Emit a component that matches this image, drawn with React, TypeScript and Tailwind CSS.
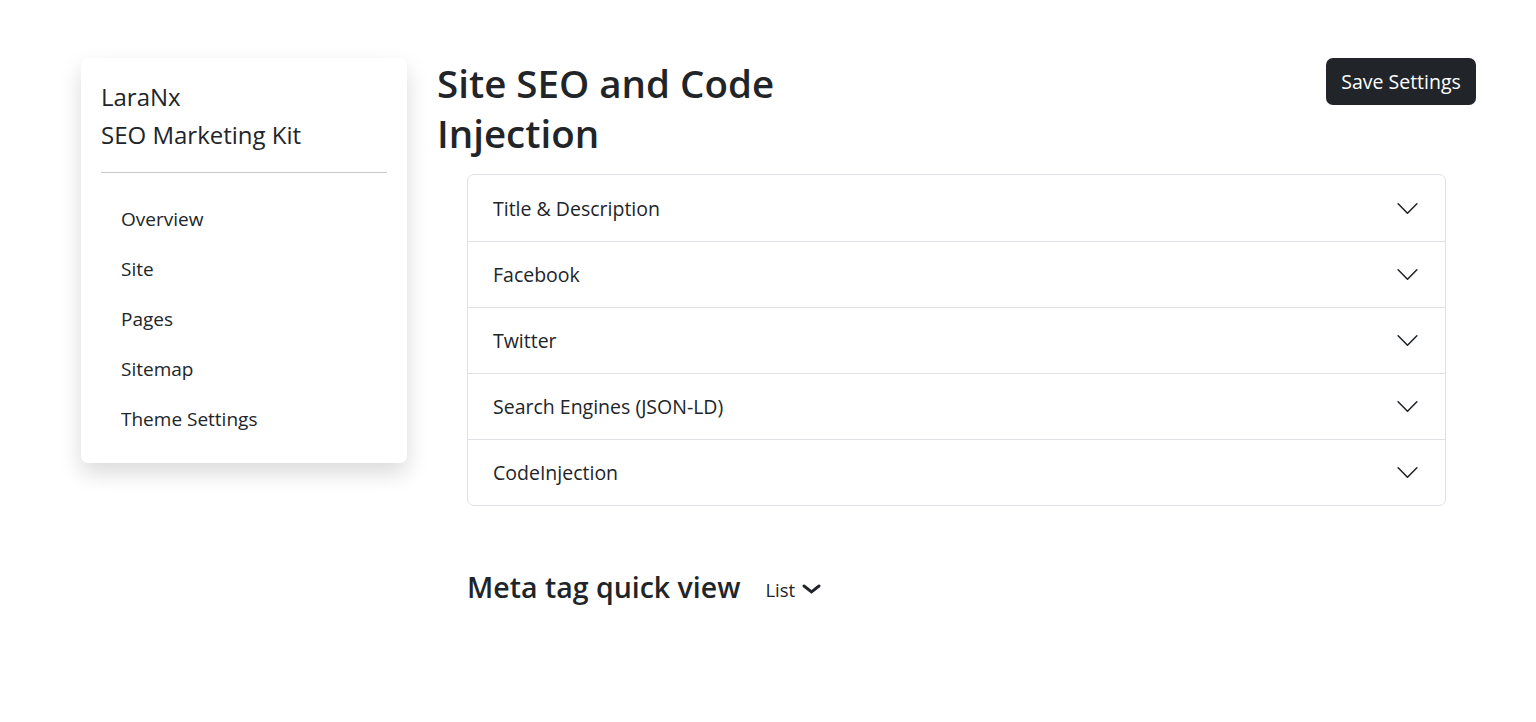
import React from "react";

const items = [
  "Title & Description",
  "Facebook",
  "Twitter",
  "Search Engines (JSON-LD)",
  "CodeInjection",
];

const nav = ["Overview", "Site", "Pages", "Sitemap", "Theme Settings"];

function Chevron() {
  return (
    <svg width="25" height="25" viewBox="0 0 16 16" fill="none" className="shrink-0">
      <path
        d="M2 5L8 11L14 5"
        stroke="#212529"
        strokeWidth="1"
        strokeLinecap="round"
        strokeLinejoin="round"
      />
    </svg>
  );
}

export default function App() {
  return (
    <div
      className="min-h-[722px] bg-white text-[#212529]"
      style={{ fontFamily: '"Open Sans", "Noto Sans", sans-serif' }}
    >
      <div className="flex items-start gap-[30px] pl-[81px] pr-[60px] pt-[58px]">
        {/* Sidebar */}
        <aside className="w-[326px] shrink-0 rounded-[7px] bg-white px-[20px] pb-[19px] pt-[20px] shadow-[0_10px_22px_rgba(0,0,0,0.15)]">
          <div className="text-[24px] leading-[37.5px]">
            <div>LaraNx</div>
            <div>SEO Marketing Kit</div>
          </div>
          <hr className="mb-[21px] mt-[19px] border-0 border-t border-[#c8c9ca]" />
          <ul>
            {nav.map((n) => (
              <li key={n} className="flex h-[50px] items-center px-[20px] text-[19px]">
                {n}
              </li>
            ))}
          </ul>
        </aside>

        {/* Main */}
        <main className="flex-1">
          <div className="flex items-start justify-between">
            <h1 className="text-[38.5px] font-semibold leading-[50px]">
              Site SEO and Code
              <br />
              Injection
            </h1>
            <button className="flex h-[47px] w-[150px] items-center justify-center rounded-[7px] bg-[#212529] text-[19.5px] text-white">
              Save Settings
            </button>
          </div>

          <div className="mx-[30px] mt-[16px] overflow-hidden rounded-[7px] border border-[#dee2e6]">
            {items.map((t, i) => (
              <div
                key={t}
                className={
                  "flex h-[66px] items-center justify-between px-[25px] text-[19.5px] " +
                  (i > 0 ? "border-t border-[#dee2e6]" : "")
                }
              >
                <span className="pt-[1px]">{t}</span>
                <Chevron />
              </div>
            ))}
          </div>

          <div className="ml-[30px] mt-[64px] flex items-center gap-[25px]">
            <h3 className="text-[28.5px] font-semibold leading-[35px]">Meta tag quick view</h3>
            <div className="mt-[5px] flex items-center gap-[7px] text-[18.5px]">
              <span>List</span>
              <svg width="19" height="10" viewBox="0 0 19 10" fill="none" className="-mt-[2px]">
                <path
                  d="M2 2L9.5 8L17 2"
                  stroke="#212529"
                  strokeWidth="2.9"
                  strokeLinecap="round"
                  strokeLinejoin="miter"
                />
              </svg>
            </div>
          </div>
        </main>
      </div>
    </div>
  );
}
